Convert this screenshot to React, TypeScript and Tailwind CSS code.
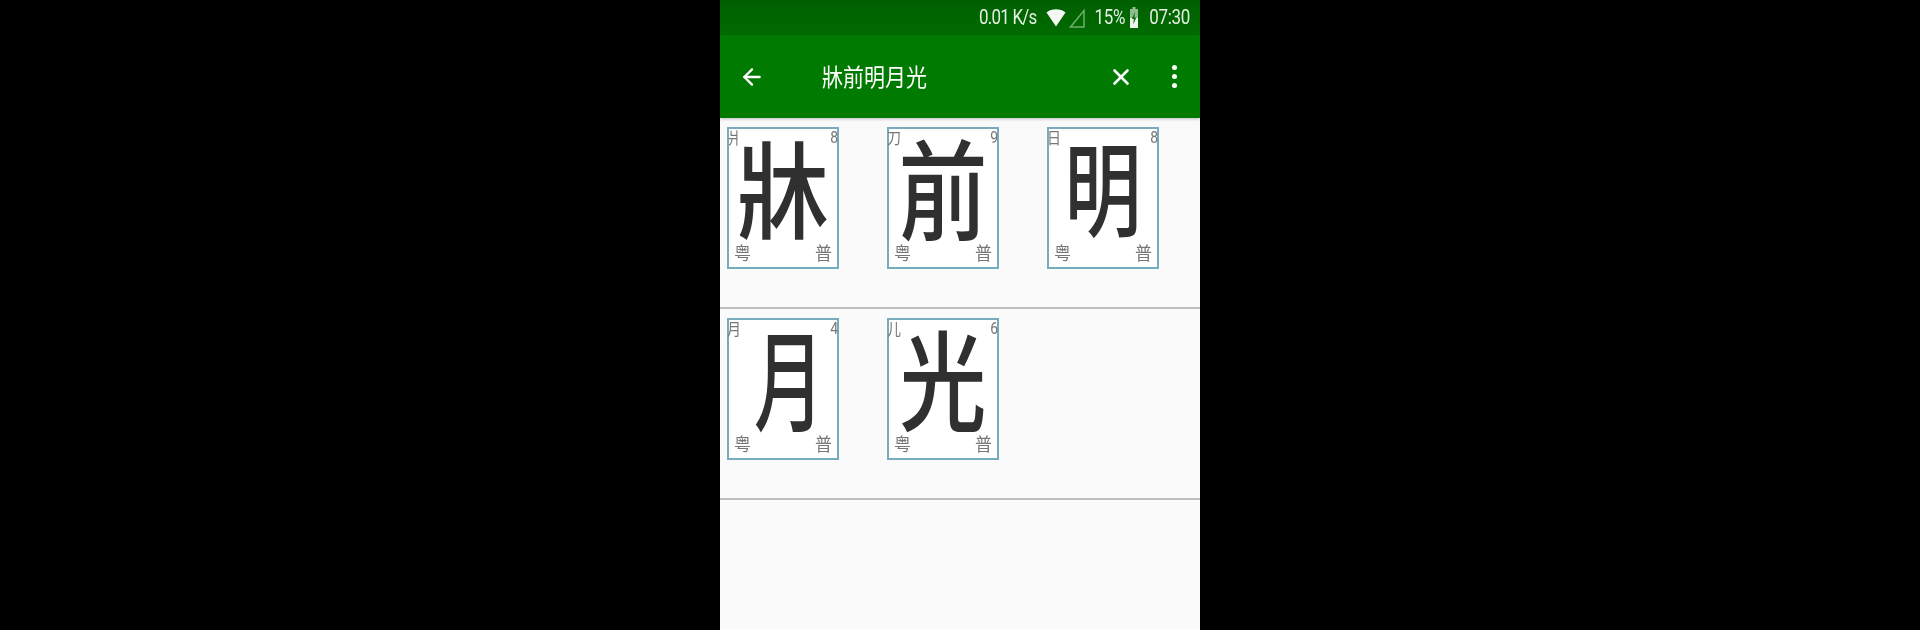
import { ArrowLeft, X } from "lucide-react";

const cjk = "font-['Noto_Sans_CJK_TC','Noto_Sans_CJK_SC',sans-serif]";

const rows = [
  [
    { char: "牀", radical: "爿", strokes: 8, shape: "scale-x-[0.92] scale-y-[1.05]" },
    { char: "前", radical: "刀", strokes: 9, shape: "scale-x-[0.89] scale-y-[1.09]" },
    { char: "明", radical: "日", strokes: 8, shape: "scale-x-[0.77] scale-y-[1.03]" },
  ],
  [
    { char: "月", radical: "月", strokes: 4, shape: "scale-x-[0.7] scale-y-[1.1] translate-x-[6px]" },
    { char: "光", radical: "儿", strokes: 6, shape: "scale-x-[0.87] scale-y-[1.09]" },
  ],
];

type CardProps = { char: string; radical: string; strokes: number; shape: string };

const CharCard = ({ char, radical, strokes, shape }: CardProps) => {
  return (
    <div className={`relative w-[112px] h-[142px] bg-white border-2 border-[#76adbd] flex flex-col justify-between ${cjk}`}>
      {/* big character sits over the corner labels */}
      <div className="absolute inset-0 flex items-center justify-center pb-[27px] text-[100px] leading-none text-[#303030] font-medium">
        <span className={shape}>{char}</span>
      </div>
      <div className="flex justify-between items-start text-[14px] leading-[16px] text-[#777777] -ml-[2px] -mr-[1px]">
        <span className="scale-y-[1.15]">{radical}</span>
        <span className="scale-y-[1.15] font-['Roboto',sans-serif]">{strokes}</span>
      </div>
      <div className="flex justify-between text-[17px] leading-[20px] text-[#777777] px-[5px] pb-[5px]">
        <span className="scale-y-[1.1]">粤</span>
        <span className="scale-y-[1.1]">普</span>
      </div>
    </div>
  );
};

const StatusBar = () => (
  <div className="h-[35px] bg-gradient-to-b from-[#005f00] to-[#006c00] flex items-center justify-end pr-[10px] text-[17px] text-[#e4efe4] font-['Roboto',sans-serif]">
    <span className="scale-y-[1.15] tracking-[-0.8px]">0.01 K/s</span>
    <svg className="ml-[10px]" width="20" height="18" viewBox="0 0 20 18">
      <path d="M0.5 3.5C5.5-0.8 14.5-0.8 19.5 3.5L10 17.5z" fill="#f4f8f4" />
    </svg>
    <svg className="ml-[3px]" width="16" height="20" viewBox="0 0 16 20">
      <path d="M1.5 19L15 2.5V19z" fill="none" stroke="#6fae6f" strokeWidth="1.5" />
    </svg>
    <span className="ml-[9px] scale-y-[1.15] tracking-[-0.3px]">15%</span>
    <svg className="ml-[5px]" width="8" height="21" viewBox="0 0 8 21">
      <path d="M2.5 0h3v2H8V21H0V2h2.5z" fill="#8fbd8f" />
      <path d="M0 11h8V21H0z" fill="#eef5ee" />
      <path d="M4.8 5L1.8 12h2L3.2 17.5l3.2-7h-2z" fill="#0d6f0d" />
    </svg>
    <span className="ml-[11px] scale-y-[1.15] tracking-[-0.3px]">07:30</span>
  </div>
);

const Toolbar = () => (
  <div className="h-[83px] bg-[#007a00] flex items-center text-white shadow-[0_1px_3px_rgba(0,0,0,0.25)] relative">
    <ArrowLeft className="ml-[19px] shrink-0" size={26} strokeWidth={2.2} />
    <span className={`ml-[57px] text-[21px] scale-y-[1.15] ${cjk}`}>牀前明月光</span>
    <X className="ml-auto shrink-0" size={26} strokeWidth={2.4} />
    <div className="ml-[38px] mr-[23px] flex flex-col gap-[4px]">
      <span className="w-[5px] h-[5px] rounded-full bg-white" />
      <span className="w-[5px] h-[5px] rounded-full bg-white" />
      <span className="w-[5px] h-[5px] rounded-full bg-white" />
    </div>
  </div>
);

export default function App() {
  return (
    <div className="w-[1920px] h-[630px] bg-black flex justify-center overflow-hidden">
      <div className="w-[480px] h-full bg-[#fafafa] flex flex-col blur-[0.4px]">
        <StatusBar />
        <Toolbar />
        {rows.map((row, i) => (
          <div key={i} className="h-[191px] shrink-0 border-b-2 border-[#bdbdbd] pt-[9px] pl-[7px] flex gap-[48px]">
            {row.map((c) => (
              <CharCard key={c.char} {...c} />
            ))}
          </div>
        ))}
      </div>
    </div>
  );
}
